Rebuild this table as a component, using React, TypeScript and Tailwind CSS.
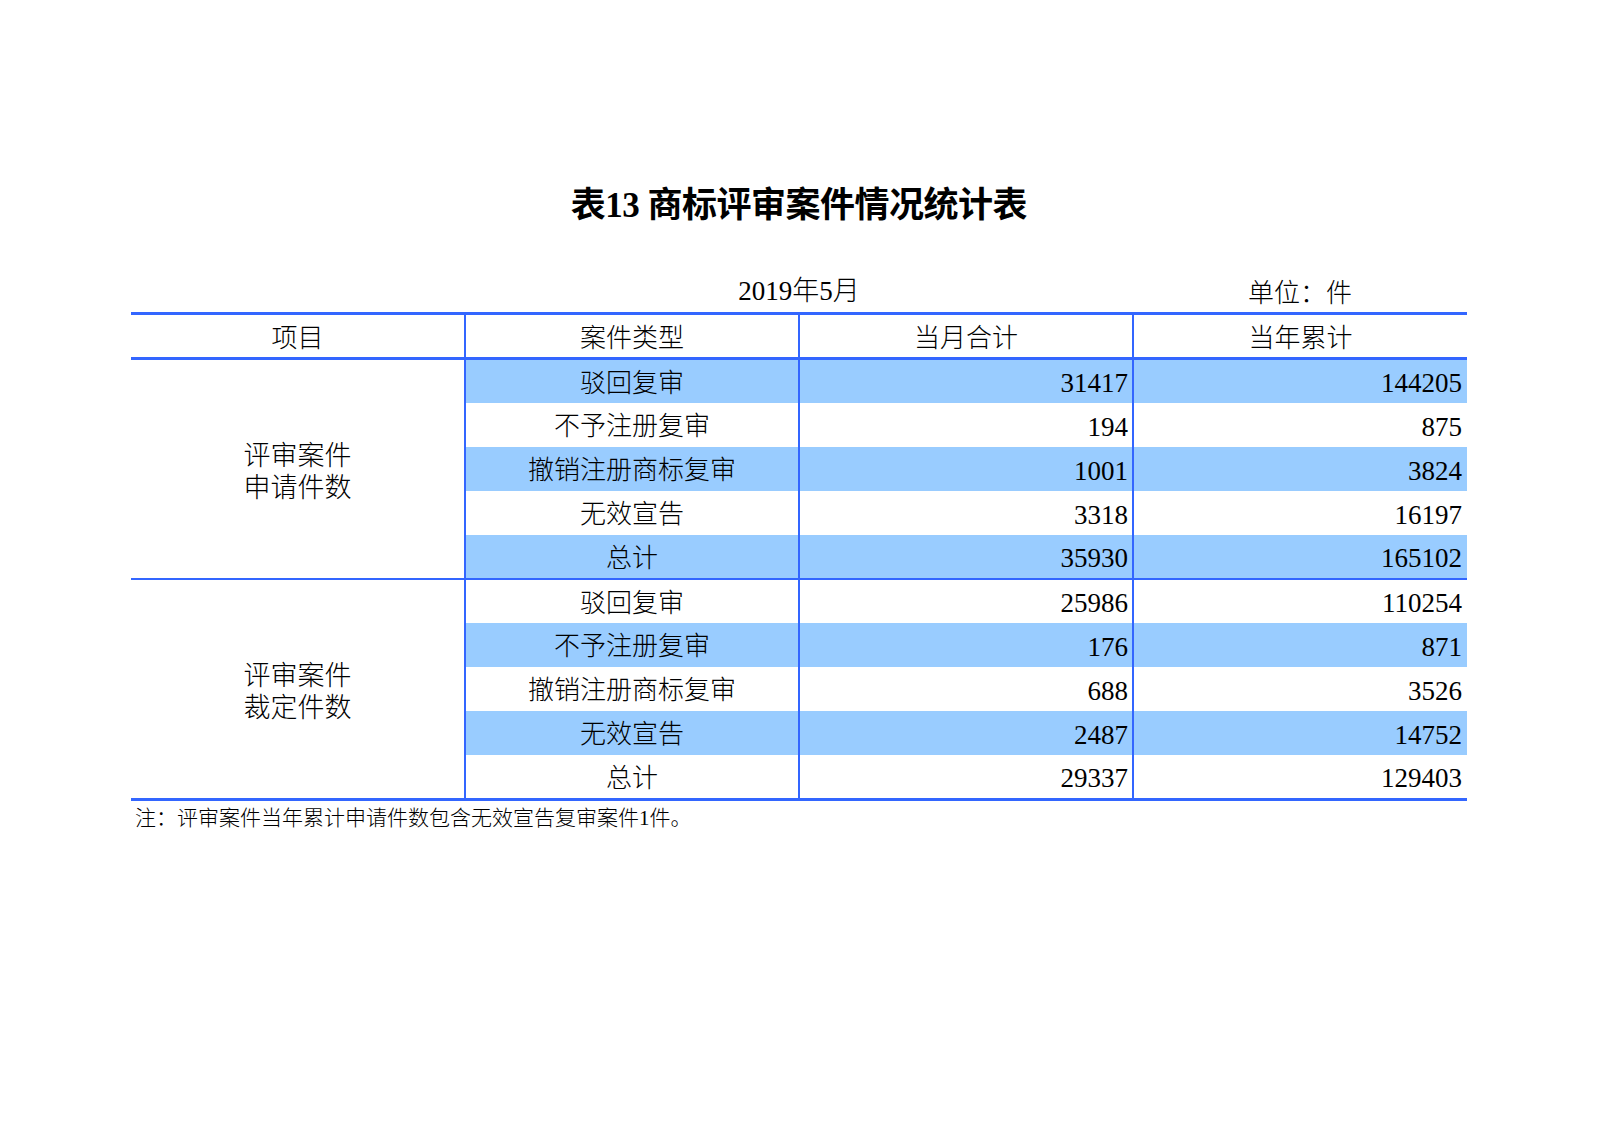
import React from 'react';

const font = { fontFamily: '"Liberation Serif", "Noto Sans CJK SC", serif' };

type Row = { type: string; month: string; year: string };

const groups: { label: string[]; rows: Row[]; filled: number[] }[] = [
  {
    label: ['评审案件', '申请件数'],
    rows: [
      { type: '驳回复审', month: '31417', year: '144205' },
      { type: '不予注册复审', month: '194', year: '875' },
      { type: '撤销注册商标复审', month: '1001', year: '3824' },
      { type: '无效宣告', month: '3318', year: '16197' },
      { type: '总计', month: '35930', year: '165102' },
    ],
    filled: [0, 2, 4],
  },
  {
    label: ['评审案件', '裁定件数'],
    rows: [
      { type: '驳回复审', month: '25986', year: '110254' },
      { type: '不予注册复审', month: '176', year: '871' },
      { type: '撤销注册商标复审', month: '688', year: '3526' },
      { type: '无效宣告', month: '2487', year: '14752' },
      { type: '总计', month: '29337', year: '129403' },
    ],
    filled: [1, 3],
  },
];

export default function App() {
  return (
    <div className="w-[1600px] h-[1130px] bg-white text-black font-light" style={font}>
      <div className="ml-[131px] w-[1336px] pt-[184px]">
        {/* title */}
        <h1 className="text-center text-[35px] font-bold leading-[44px] tracking-[-0.5px]">
          表13 商标评审案件情况统计表
        </h1>

        {/* caption row */}
        <div className="grid grid-cols-4 mt-[48px] leading-[30px]">
          <div />
          <div className="col-span-2 text-center text-[27px]">2019年5月</div>
          <div className="text-center text-[26px] pt-[3px]">单位：件</div>
        </div>

        {/* table */}
        <table className="mt-[3px] w-full border-collapse text-[26px] table-fixed">
          <thead>
            <tr className="h-[45px] leading-[30px] border-t-[3px] border-b-[3px] border-[#3366ff]">
              <th className="font-light text-center pt-[6px]">项目</th>
              <th className="font-light text-center pt-[6px] border-l-2 border-[#3366ff]">案件类型</th>
              <th className="font-light text-center pt-[6px] border-l-2 border-[#3366ff]">当月合计</th>
              <th className="font-light text-center pt-[6px] border-l-2 border-[#3366ff]">当年累计</th>
            </tr>
          </thead>
          {groups.map((g, gi) => (
            <tbody
              key={gi}
              className={gi === 0 ? 'border-b-2 border-[#3366ff]' : 'border-b-[3px] border-[#3366ff]'}
            >
              {g.rows.map((r, ri) => {
                const fill = g.filled.includes(ri) ? 'bg-[#99ccff]' : 'bg-white';
                return (
                  <tr key={ri} className={`${gi === 1 && ri === 4 ? 'h-[45px]' : 'h-[44px]'} leading-[30px]`}>
                    {ri === 0 && (
                      <td
                        rowSpan={5}
                        className="text-center align-middle pt-[6px] text-[27px] leading-[32px] bg-white"
                      >
                        {g.label.map((l) => (
                          <div key={l}>{l}</div>
                        ))}
                      </td>
                    )}
                    <td className={`text-center pt-[5px] border-l-2 border-[#3366ff] ${fill}`}>{r.type}</td>
                    <td
                      className={`text-right text-[27px] font-normal pt-[4px] pr-[4px] border-l-2 border-[#3366ff] ${fill}`}
                    >
                      {r.month}
                    </td>
                    <td
                      className={`text-right text-[27px] font-normal pt-[4px] pr-[5px] border-l-2 border-[#3366ff] ${fill}`}
                    >
                      {r.year}
                    </td>
                  </tr>
                );
              })}
            </tbody>
          ))}
        </table>

        {/* footnote */}
        <p className="pl-[4px] mt-[3px] text-[21px] leading-[28px]">
          注：评审案件当年累计申请件数包含无效宣告复审案件1件。
        </p>
      </div>
    </div>
  );
}
